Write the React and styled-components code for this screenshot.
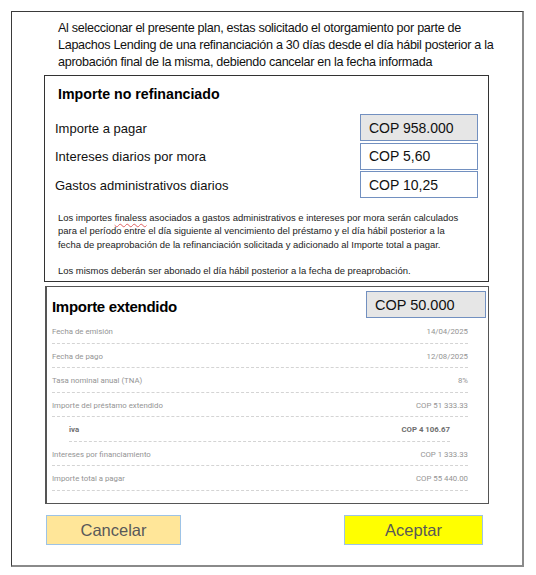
import React from "react";
import styled, { createGlobalStyle } from "styled-components";

const GlobalStyle = createGlobalStyle`
  html, body {
    margin: 0;
    padding: 0;
    background: #ffffff;
  }
  body {
    font-family: "Liberation Sans", Arial, sans-serif;
    color: #000;
  }
`;

const Frame = styled.div`
  box-sizing: border-box;
  margin: 11px 0 0 11px;
  width: 513px;
  height: 556px;
  border: 1px solid #3a3a3a;
  border-right: 2px solid #8a8a8a;
  border-bottom: 2px solid #8a8a8a;
  padding: 8px 0 0 32px;
`;

const Intro = styled.p`
  margin: 0 0 4px 14px;
  font-size: 12.6px;
  letter-spacing: -0.3px;
  line-height: 17px;
  color: #111;
  white-space: nowrap;
`;

const Section = styled.section`
  box-sizing: border-box;
  width: ${(p) => p.$w || 445}px;
  height: ${(p) => p.$h}px;
  margin-left: ${(p) => p.$ml || 0}px;
  margin-top: ${(p) => p.$mt || 0}px;
  border: 1px solid ${(p) => p.$border || "#333"};
  border-left-width: ${(p) => p.$lw || 1}px;
`;

const Title = styled.h3`
  margin: ${(p) => p.$mt || 0}px 0 0 0;
  font-size: ${(p) => p.$size || 14.2}px;
  letter-spacing: ${(p) => p.$ls || 0}px;
  font-weight: bold;
  color: #000;
`;

const FirstHead = styled.div`
  padding: 10px 0 0 13px;
  height: 28px;
  box-sizing: border-box;
`;

const AmountRows = styled.div`
  display: flex;
  flex-direction: column;
  gap: 1.5px;
  margin-top: 10px;
`;

const AmountRow = styled.div`
  display: flex;
  align-items: center;
  justify-content: space-between;
  padding-left: 10px;
  padding-right: 10px;
  height: 27px;
`;

const AmountLabel = styled.span`
  font-size: 13px;
  color: #111;
  padding-top: 1px;
`;

const ValueBox = styled.div`
  box-sizing: border-box;
  width: ${(p) => p.$w || 118}px;
  height: 27px;
  border: 1px solid #7290c0;
  background: ${(p) => (p.$grey ? "#e6e6e6" : "#ffffff")};
  padding-left: 8px;
  display: flex;
  align-items: center;
  font-size: ${(p) => p.$size || 14}px;
  color: #111;
`;

const Notes = styled.div`
  margin: 13px 0 0 13px;
  font-size: 9.45px;
  line-height: 13.3px;
  color: #222;
  white-space: nowrap;
  p {
    margin: 0 0 13.3px 0;
  }
`;

const Typo = styled.span`
  text-decoration: underline wavy #e06060;
  text-decoration-thickness: 1px;
  text-underline-offset: 2px;
`;

const ExtHead = styled.div`
  display: flex;
  align-items: center;
  justify-content: space-between;
  padding: 4px 2px 0 5px;
`;

const Details = styled.div`
  margin: 1px 20px 0 5px;
  font-family: Roboto, "Liberation Sans", sans-serif;
`;

const DetailRow = styled.div`
  display: flex;
  justify-content: space-between;
  align-items: center;
  height: 24.5px;
  box-sizing: border-box;
  border-bottom: 1px dashed #d4d4d4;
  margin-left: ${(p) => (p.$sub ? 17 : 0)}px;
  margin-right: ${(p) => (p.$sub ? 18 : 0)}px;
  font-size: 7.8px;
  color: ${(p) => (p.$sub ? "#6e6e6e" : "#949494")};
  font-weight: ${(p) => (p.$sub ? 700 : 400)};
  padding-top: 2px;
`;

const Buttons = styled.div`
  display: flex;
  justify-content: space-between;
  width: 437px;
  margin: 11px 0 0 2px;
`;

const Button = styled.button`
  box-sizing: border-box;
  width: ${(p) => p.$w}px;
  height: 30px;
  border: 1px solid #9dc3e6;
  background: ${(p) => p.$bg};
  color: #595959;
  font-family: "Liberation Sans", Arial, sans-serif;
  font-size: 16.5px;
  padding: 0;
  cursor: pointer;
`;

const details = [
  { label: "Fecha de emisión", value: "14/04/2025" },
  { label: "Fecha de pago", value: "12/08/2025" },
  { label: "Tasa nominal anual (TNA)", value: "8%" },
  { label: "Importe del préstamo extendido", value: "COP 51 333.33" },
  { label: "iva", value: "COP 4 106.67", sub: true },
  { label: "Intereses por financiamiento", value: "COP 1 333.33" },
  { label: "Importe total a pagar", value: "COP 55 440.00" },
];

export default function App() {
  return (
    <>
      <GlobalStyle />
      <Frame>
        <Intro>
          Al seleccionar el presente plan, estas solicitado el otorgamiento por parte de
          <br />
          Lapachos Lending de una refinanciación a 30 días desde el día hábil posterior a la
          <br />
          aprobación final de la misma, debiendo cancelar en la fecha informada
        </Intro>

        <Section $h={207}>
          <FirstHead>
            <Title>Importe no refinanciado</Title>
          </FirstHead>
          <AmountRows>
            <AmountRow>
              <AmountLabel>Importe a pagar</AmountLabel>
              <ValueBox $grey>COP 958.000</ValueBox>
            </AmountRow>
            <AmountRow>
              <AmountLabel>Intereses diarios por mora</AmountLabel>
              <ValueBox>COP 5,60</ValueBox>
            </AmountRow>
            <AmountRow>
              <AmountLabel>Gastos administrativos diarios</AmountLabel>
              <ValueBox>COP 10,25</ValueBox>
            </AmountRow>
          </AmountRows>
          <Notes>
            <p>
              Los importes <Typo>finaless</Typo> asociados a gastos administrativos e intereses por mora serán calculados
              <br />
              para el período entre el día siguiente al vencimiento del préstamo y el día hábil posterior a la
              <br />
              fecha de preaprobación de la refinanciación solicitada y adicionado al Importe total a pagar.
            </p>
            <p>Los mismos deberán ser abonado el día hábil posterior a la fecha de preaprobación.</p>
          </Notes>
        </Section>

        <Section $h={218} $w={444} $ml={1} $mt={4} $border="#555" $lw={2}>
          <ExtHead>
            <Title $size={15} $ls={-0.3} $mt={3}>Importe extendido</Title>
            <ValueBox $grey $w={120} $size={14.5}>COP 50.000</ValueBox>
          </ExtHead>
          <Details>
            {details.map((d) => (
              <DetailRow key={d.label} $sub={d.sub}>
                <span>{d.label}</span>
                <span>{d.value}</span>
              </DetailRow>
            ))}
          </Details>
        </Section>

        <Buttons>
          <Button $w={135} $bg="#ffe699">Cancelar</Button>
          <Button $w={139} $bg="#ffff00">Aceptar</Button>
        </Buttons>
      </Frame>
    </>
  );
}
